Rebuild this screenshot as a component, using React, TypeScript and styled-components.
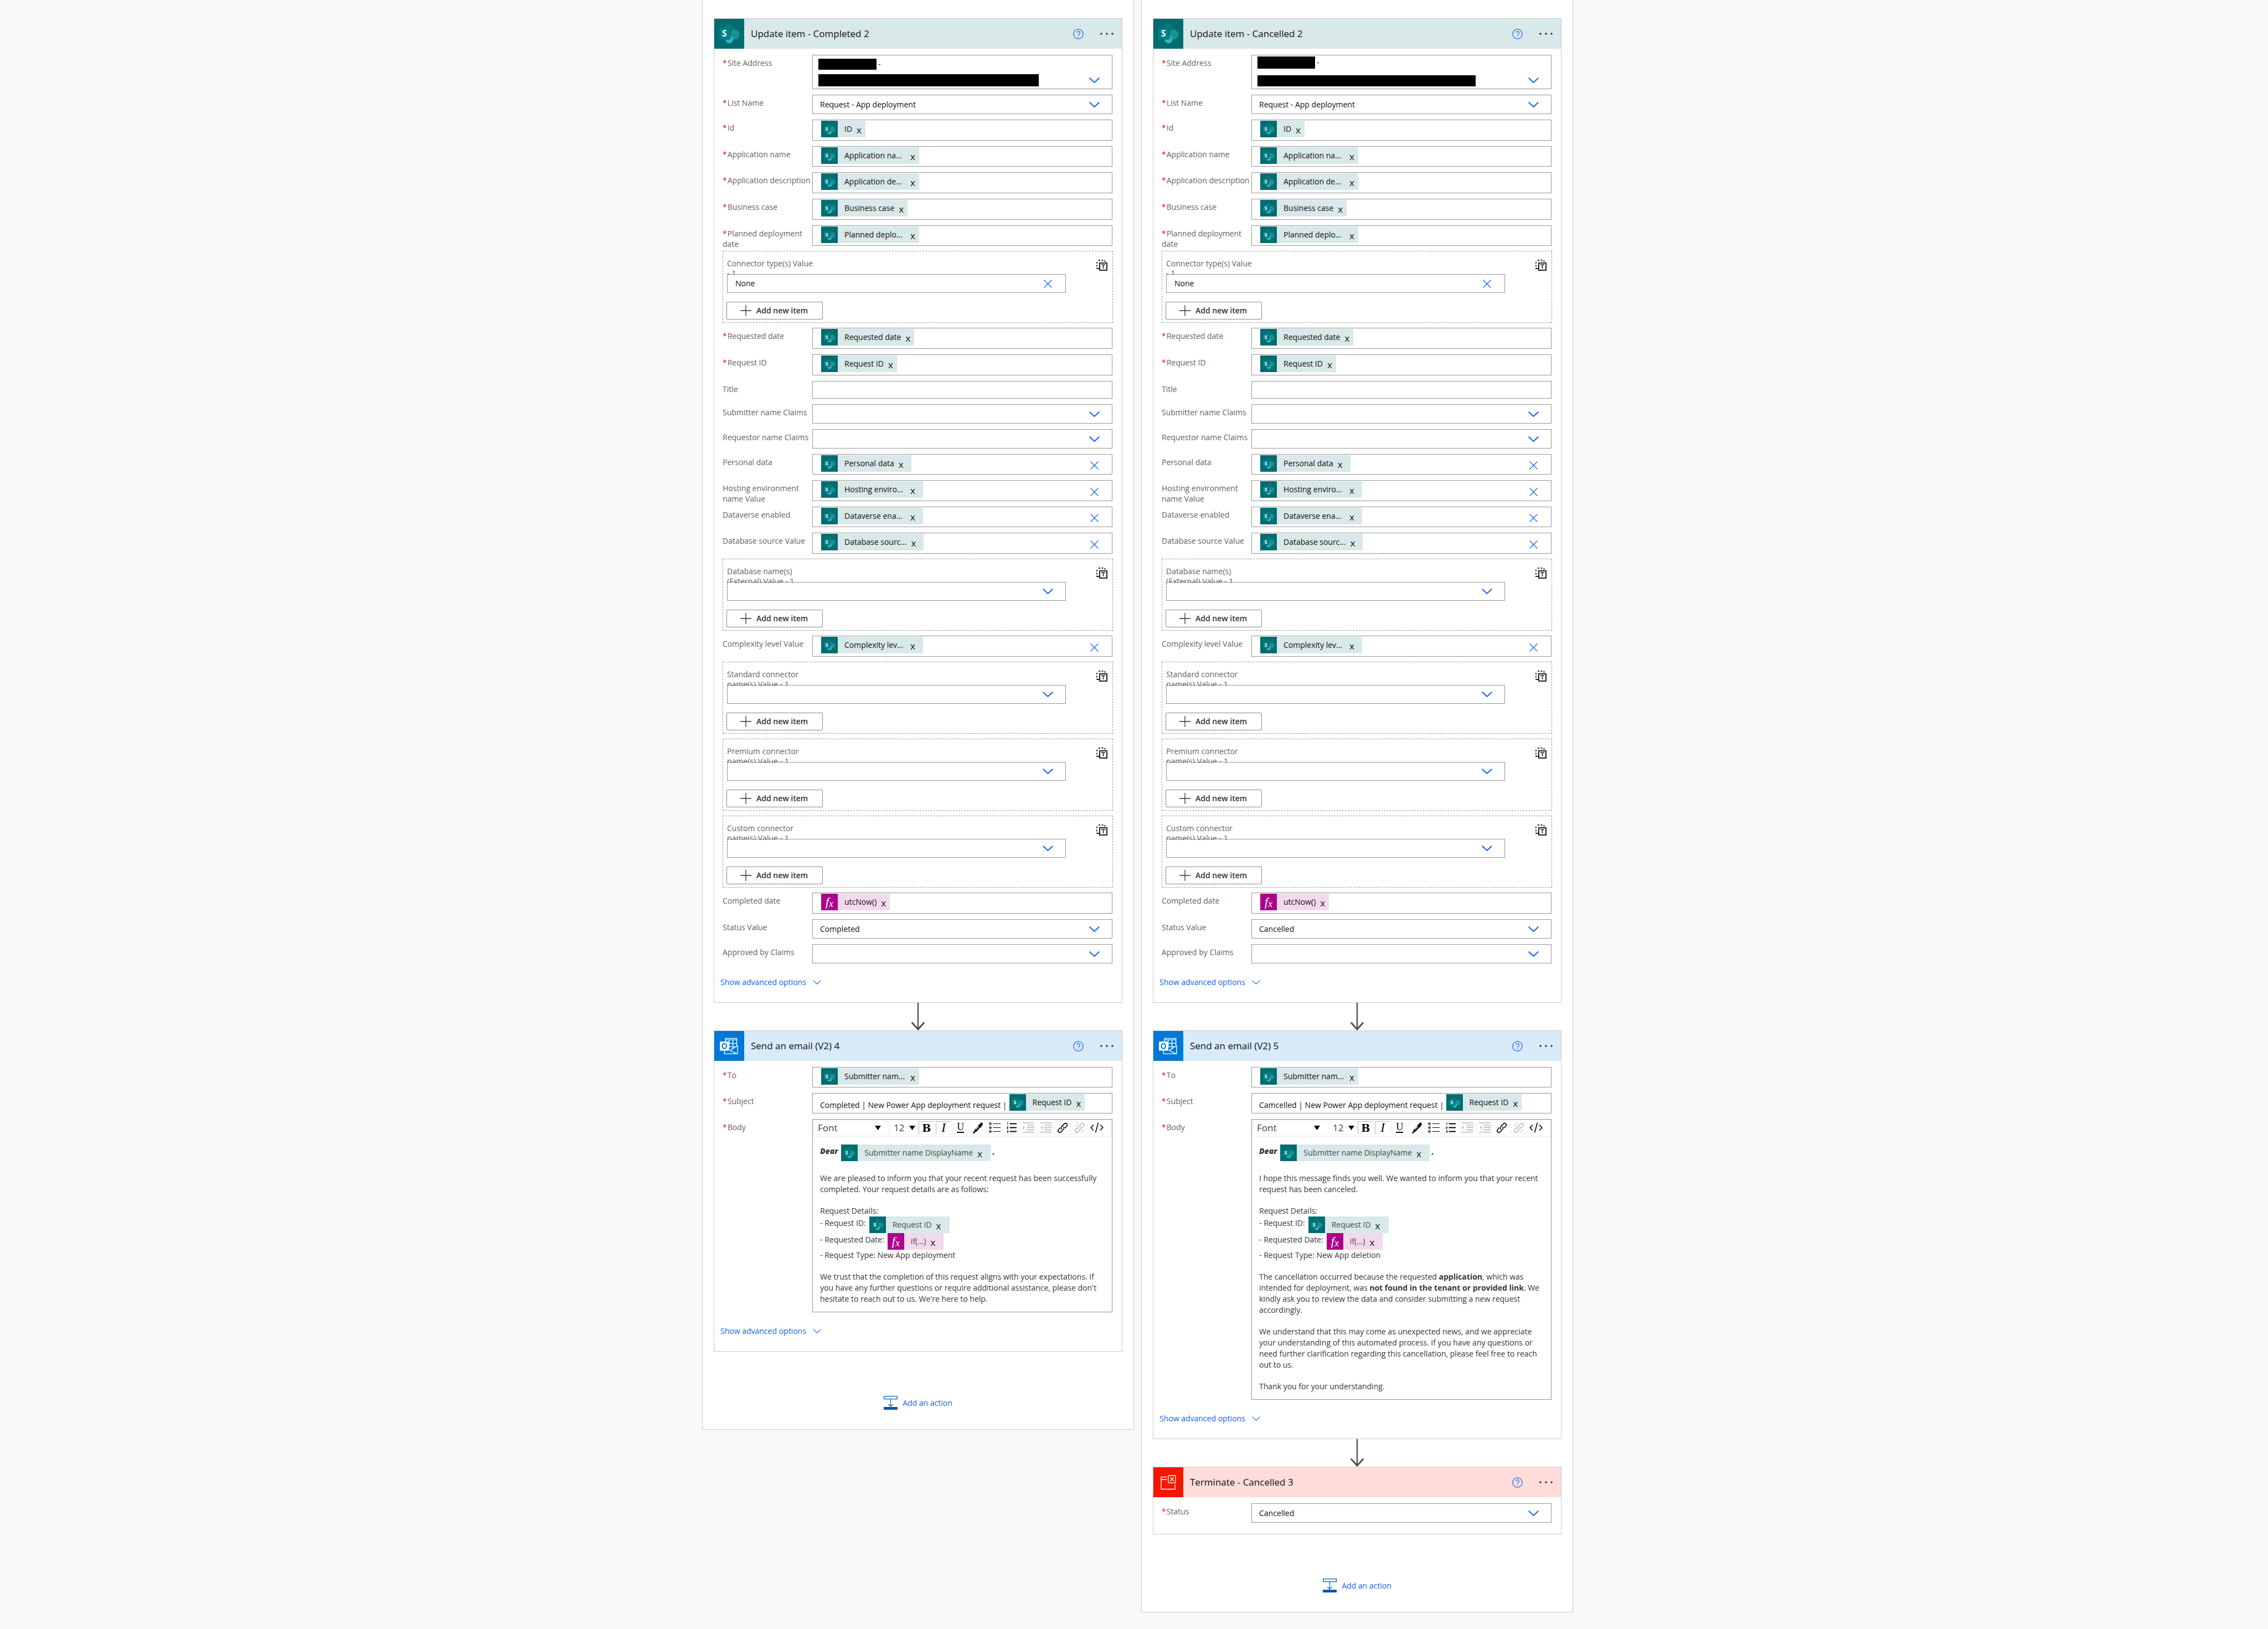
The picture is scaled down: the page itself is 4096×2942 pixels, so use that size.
import React, { useId } from "react";
import styled, { createGlobalStyle, css } from "styled-components";

const colors = {
  page: "#f8f8f8",
  panelBorder: "#c8c8c8",
  fieldBorder: "#949494",
  label: "#666462",
  body: "#383838",
  link: "#1462fa",
  required: "#e81123",
};

const GlobalStyle = createGlobalStyle`
  *, *::before, *::after { box-sizing: border-box; }
  html, body { margin: 0; background: ${colors.page}; }
  body, button, input, select {
    font-family: "Open Sans", "Noto Sans", sans-serif;
    font-size: 14px;
    line-height: 20px;
  }
  button { margin: 0; padding: 0; border: 0; background: none; color: inherit; cursor: pointer; }
  svg { display: block; flex: none; }
  p { margin: 0; }
`;

/* ---------- page ---------- */

const Canvas = styled.main`
  display: flex;
  justify-content: center;
  align-items: flex-start;
  gap: 13px;
  padding: 0 0 31px 13px;
`;

const Branch = styled.section`
  flex: 0 1 780px;
  min-width: 0;
  display: flex;
  flex-direction: column;
  padding: 33px 20px 35px;
  background: #fff;
  border: 1px solid ${colors.panelBorder};
  border-top: 0;
`;

const Connector = styled.div`
  display: flex;
  justify-content: center;
  height: 50px;
`;

const AddAction = styled.button`
  align-self: center;
  display: flex;
  align-items: center;
  gap: 9px;
  margin-top: 80px;
  color: ${colors.link};
`;

/* ---------- card ---------- */

const Card = styled.article`
  border: 1px solid ${colors.panelBorder};
  background: #fff;
`;

const CardHeader = styled.header<{ $tint: string }>`
  display: flex;
  align-items: center;
  height: 54px;
  padding-right: 15px;
  background: ${(p) => p.$tint};
`;

const CardLogo = styled.span<{ $color: string }>`
  flex: none;
  width: 54px;
  height: 54px;
  background: ${(p) => p.$color};
`;

const CardTitle = styled.h2`
  flex: 1;
  margin: 0 0 0 12px;
  font-size: 17px;
  line-height: 24px;
  font-weight: 400;
  color: #111;
`;

const HeaderButtons = styled.div`
  display: flex;
  align-items: center;
  gap: 30px;
`;

const CardBody = styled.div<{ $bottom: number }>`
  padding: 11px 17px ${(p) => p.$bottom}px 15px;
`;

const AdvancedButton = styled.button`
  display: flex;
  align-items: center;
  gap: 12px;
  margin: 24px 0 0 -4px;
  color: ${colors.link};
`;

/* ---------- rows ---------- */

const Row = styled.div`
  display: grid;
  grid-template-columns: 162px minmax(0, 1fr);
  align-items: start;
`;

const Rows = styled.div`
  display: flex;
  flex-direction: column;
  & > * + * { margin-top: 9px; }
  & > ${Row} + ${Row} { margin-top: 10px; }
`;

const Label = styled.label`
  height: 32px;
  padding-top: 5px;
  line-height: 19px;
  color: ${colors.label};
`;

const Required = styled.span`
  margin-right: 1px;
  color: ${colors.required};
`;

const box = css`
  border: 1px solid ${colors.fieldBorder};
  background: #fff;
  color: #111;
`;

const TextInput = styled.input`
  ${box}
  width: 100%;
  height: 32px;
  padding: 0 13px;
  border-radius: 0;
`;

const SelectFrame = styled.div<{ $height: number }>`
  ${box}
  display: grid;
  align-items: center;
  height: ${(p) => p.$height}px;
  & > * { grid-area: 1 / 1; }
  & > svg { justify-self: end; margin-right: 22px; pointer-events: none; }
`;

const Select = styled.select`
  appearance: none;
  width: 100%;
  height: 100%;
  padding: 0 60px 0 13px;
  border: 0;
  border-radius: 0;
  background: transparent;
  color: #111;
`;

const ClearFrame = styled.div`
  ${box}
  display: flex;
  align-items: center;
  height: 34px;
  padding-right: 24px;
`;

const BareInput = styled.input`
  flex: 1;
  min-width: 0;
  padding: 0 14px;
  border: 0;
  background: transparent;
  color: #111;
`;

const TokenField = styled.div<{ $height: number }>`
  ${box}
  display: flex;
  align-items: flex-start;
  height: ${(p) => p.$height}px;
  padding: 1px 24px 0 15px;
`;

const ClearButton = styled.button`
  align-self: center;
  margin: 3px 0 0 auto;
`;

const SubjectText = styled.span`
  margin: 10px 4px 0 -2px;
  white-space: nowrap;
`;

const AddressBox = styled.button`
  ${box}
  display: flex;
  align-items: flex-end;
  justify-content: space-between;
  width: 100%;
  height: 62px;
  padding: 0 22px 4px 10px;
`;

const AddressLines = styled.span<{ $gap: number }>`
  display: flex;
  flex-direction: column;
  gap: ${(p) => p.$gap}px;
`;

const AddressLine = styled.span<{ $height: number }>`
  display: flex;
  align-items: center;
  gap: 3px;
  height: ${(p) => p.$height}px;
`;

const Redaction = styled.span<{ $width: number }>`
  width: ${(p) => p.$width}px;
  height: 100%;
  background: #000;
`;

const AddressChevron = styled.span`
  padding-bottom: 6px;
`;

/* ---------- tokens ---------- */

const Token = styled.span<{ $tint: string; $end: number; $color: string }>`
  flex: none;
  display: inline-flex;
  align-items: center;
  height: 30px;
  padding-right: ${(p) => p.$end}px;
  background: ${(p) => p.$tint};
  color: ${(p) => p.$color};
  line-height: 20px;
`;

const TokenLabel = styled.span<{ $wide: boolean }>`
  min-width: ${(p) => (p.$wide ? 111 : 0)}px;
  margin: 0 8px 0 12px;
  white-space: nowrap;
`;

const TokenRemove = styled.button`
  padding-top: 3px;
  font-size: 17px;
  color: #111;
`;

const TokenLogo = styled.span<{ $color: string }>`
  display: flex;
  align-items: center;
  justify-content: center;
  width: 30px;
  height: 30px;
  background: ${(p) => p.$color};
`;

const Formula = styled.span`
  font: italic 22px/30px "Liberation Serif", serif;
  color: #fff;
  & > sub { font-size: 18px; line-height: 0; vertical-align: -2px; }
`;

/* ---------- repeated group ---------- */

const Group = styled.div`
  display: grid;
  grid-template-columns: minmax(0, 1fr) 84px;
  align-items: start;
  margin-right: -1px;
  height: 130px;
  padding: 12px 0 5px 7px;
  border: 1px dashed #999;
`;

const GroupMain = styled.div`
  display: flex;
  flex-direction: column;
`;

const GroupLabel = styled.label`
  position: relative;
  width: 160px;
  height: 31px;
  margin-bottom: -2px;
  padding-top: 1px;
  overflow: hidden;
  line-height: 18px;
  color: ${colors.label};
  pointer-events: none;
`;

const GroupToggle = styled.button`
  justify-self: end;
  margin: 3px 9px 0 0;
`;

const AddItem = styled.button`
  display: flex;
  align-items: center;
  gap: 9px;
  width: 174px;
  height: 32px;
  margin: 16px 0 0 -1px;
  padding-left: 24px;
  border: 1px solid #8a8886;
  border-radius: 2px;
  font-weight: 600;
  color: #323130;
`;

/* ---------- rich text ---------- */

const Editor = styled.div`
  ${box}
  padding-bottom: 13px;
`;

const Toolbar = styled.div`
  display: flex;
  align-items: center;
  gap: 1px;
  height: 31px;
  padding: 1px 12px 3px 1px;
  border: 1px solid #ededed;
`;

const ToolSelectFrame = styled.div<{ $width: number; $arrow: number }>`
  display: grid;
  align-items: center;
  flex: none;
  width: ${(p) => p.$width}px;
  height: 25px;
  border: 1px solid #f1f1f1;
  border-radius: 2px;
  & > * { grid-area: 1 / 1; }
  & > svg { justify-self: end; margin-right: ${(p) => p.$arrow}px; pointer-events: none; }
`;

const ToolSelect = styled.select`
  appearance: none;
  width: 100%;
  height: 100%;
  padding: 0 0 0 6px;
  border: 0;
  background: transparent;
  font-size: 17px;
  line-height: 22px;
  color: #444;
`;

const ToolButtons = styled.div`
  flex: 1;
  display: grid;
  grid-template-columns: repeat(11, minmax(0, 1fr));
  column-gap: 2px;
`;

const ToolButton = styled.button<{ $active?: boolean; $bare?: boolean }>`
  display: flex;
  align-items: center;
  justify-content: center;
  height: 24px;
  border: 1px solid ${(p) => (p.$bare ? "transparent" : "#f1f1f1")};
  border-radius: 2px;
  color: #000;
  ${(p) => p.$active && css`
    border-top-color: #b5b5b5;
    border-left-color: #b5b5b5;
  `}
  &:disabled { color: #b8b8b8; }
`;

const Glyph = styled.span<{ $kind: "b" | "i" | "u" }>`
  font-family: "DejaVu Serif", serif;
  line-height: 22px;
  ${(p) => p.$kind === "b" && css`font-size: 19px; font-weight: 700;`}
  ${(p) => p.$kind === "i" && css`font-family: "Liberation Serif", serif; font-size: 23px; font-style: italic;`}
  ${(p) => p.$kind === "u" && css`font-family: "Liberation Serif", serif; font-size: 18px; border-bottom: 2px solid; line-height: 17px;`}
`;

const Message = styled.div`
  display: flex;
  flex-direction: column;
  gap: 19px;
  padding: 14px 13px 0;
  color: ${colors.body};
`;

const Line = styled.div`
  display: flex;
  align-items: flex-start;
  gap: 6px;
  line-height: 24px;
`;

const Greeting = styled(Line)`
  margin-bottom: 2px;
  font-weight: 700;
  font-style: italic;
  gap: 4px;
  & > span > * { font-style: normal; font-weight: 400; }
  & > strong { margin-right: 2px; }
`;

/* ---------- drawings ---------- */

const Chevron = ({ w = 19, h = 10, stroke = 2 }) => (
  <svg width={w} height={h} viewBox="0 0 19 10" fill="none" stroke={colors.link} strokeWidth={stroke}>
    <path d="M0.7 0.7 9.5 9 18.3 0.7" />
  </svg>
);

const Cross = () => (
  <svg width="15" height="15" viewBox="0 0 15 15" stroke={colors.link} strokeWidth="1.3">
    <path d="M0.5 0.5 14.5 14.5M14.5 0.5 0.5 14.5" />
  </svg>
);

const SharePointLogo = ({ size }: { size: number }) => (
  <svg width={size} height={size} viewBox="0 0 198 198">
    <circle cx="98" cy="71" r="38" fill="#03787c" />
    <circle cx="134" cy="104" r="33" fill="#1a8f94" />
    <circle cx="100" cy="136" r="26" fill="#2fb6c4" />
    <path d="M38 70H110V128a10 10 0 0 1-10 10H74Z" fill="#02585b" opacity=".55" />
    <rect x="33" y="64" width="69" height="69" rx="4" fill="#038387" />
    <text x="67" y="118" textAnchor="middle" fontFamily="Open Sans, sans-serif" fontWeight="700" fontSize="56" fill="#fff">S</text>
  </svg>
);

const OutlookLogo = () => (
  <svg width="54" height="54" viewBox="0 0 198 198" fill="none" stroke="#fff" strokeWidth="5">
    <path d="M73 70V49H149V100M73 58H149M98 60V110M123 60V118M98 82H149M98 104H140" />
    <path d="M67 130V151H154V98L104 128L150 151" />
    <rect x="37" y="70" width="61" height="60" rx="3" fill="#fff" stroke="none" />
    <ellipse cx="67" cy="100" rx="14" ry="16" stroke="#0078d7" strokeWidth="8" />
  </svg>
);

const TerminateLogo = () => (
  <svg width="54" height="54" viewBox="0 0 108 108" fill="none" stroke="#fff" strokeWidth="2.6">
    <path d="M49 35H28V79H78V61M28 44H49" />
    <rect x="54" y="30" width="26" height="26" />
    <path d="M61 36 74 50M74 36 61 50" />
  </svg>
);

const HelpIcon = () => (
  <svg width="19" height="19" viewBox="0 0 19 19" fill="none" stroke={colors.link} strokeWidth="1.2">
    <circle cx="9.5" cy="9.5" r="8.7" />
    <path d="M6.9 7.3a2.7 2.7 0 1 1 4.3 2.1c-1.1.8-1.7 1.2-1.7 2.4M9.5 13.3v1.3" />
  </svg>
);

const MoreIcon = () => (
  <svg width="24" height="4" viewBox="0 0 24 4" fill="#333">
    <circle cx="2" cy="2" r="1.8" />
    <circle cx="12" cy="2" r="1.8" />
    <circle cx="22" cy="2" r="1.8" />
  </svg>
);

const ArrowDown = () => (
  <svg width="26" height="50" viewBox="0 0 26 50" fill="none" stroke="#505050">
    <path d="M13 0V47" strokeWidth="2.4" />
    <path d="M1.8 35.5 13 48 24.2 35.5" strokeWidth="3" />
  </svg>
);

const AddActionIcon = () => (
  <svg width="25" height="25" viewBox="0 0 25 25" fill="none" stroke="#0057a8">
    <rect x="0.6" y="0.6" width="23.8" height="5" strokeWidth="1.2" />
    <path d="M12.5 6V19M8.5 15 12.5 19 16.5 15" strokeWidth="1.2" />
    <rect x="0" y="20" width="25" height="5" fill="#0057a8" stroke="none" />
  </svg>
);

const SwitchIcon = () => (
  <svg width="20" height="20" viewBox="0 0 20 20" fill="none" stroke="#222">
    <path d="M4 1H15M1 4V17M2 16H5M15.5 1V5" strokeWidth="1.8" strokeDasharray="3 2.4" />
    <rect x="6" y="6" width="13" height="13" strokeWidth="2" />
    <path d="M8.8 9.2H16.2M12.5 9.2V16" strokeWidth="1.6" />
  </svg>
);

const PlusIcon = () => (
  <svg width="20" height="20" viewBox="0 0 20 20" stroke="#323130" strokeWidth="1.3">
    <path d="M10 0V20M0 10H20" />
  </svg>
);

const Triangle = () => (
  <svg width="11" height="8" viewBox="0 0 11 8"><path d="M0 0H11L5.5 8Z" fill="#000" /></svg>
);

const PenIcon = () => (
  <svg width="20" height="20" viewBox="0 0 20 20" fill="currentColor">
    <path d="M14.5 1.5c1-1.3 2.7-1.2 3.7-.2s1 2.5 0 3.6l-2 2.3.6.9-1.3 1.3-1-.7-6.8 7.8-4.2 1.3-.5-.5 1.3-4.2 6.8-6.8-.8-1 1.3-1.3 1 .6zM1 17.5h4v2H1z" />
    <path d="M6 13 11.5 7.5" stroke="#fff" strokeWidth="1.2" />
  </svg>
);

const BulletsIcon = () => (
  <svg width="21" height="19" viewBox="0 0 21 19" fill="none" stroke="currentColor" strokeWidth="1.3">
    <circle cx="2.5" cy="2.5" r="1.6" />
    <circle cx="2.5" cy="9.5" r="1.6" />
    <circle cx="2.5" cy="16.5" r="1.6" />
    <path d="M7.5 2.5H21M7.5 9.5H21M7.5 16.5H21" strokeWidth="1.2" />
  </svg>
);

const NumbersIcon = () => (
  <svg width="18" height="19" viewBox="0 0 18 19" fill="none" stroke="currentColor" strokeWidth="1">
    <path d="M5.5 2.5H18M5.5 9.5H18M5.5 16.5H18" strokeWidth="2" />
    <path d="M1 1.2 2 .6V4.5M.6 7.8h2v1.6h-2v2h2.2M.6 14.6h2v3.8h-2M.8 16.5h1.8" />
  </svg>
);

const IndentIcon = ({ flip = false }) => (
  <svg width="21" height="19" viewBox="0 0 21 19" fill="none" stroke="currentColor" strokeWidth="1.6">
    <path d="M0 1H21M8 5.2H21M8 9.4H21M8 13.6H21M0 17.8H21" />
    <path d={flip ? "M5 6V13L1.5 9.5Z" : "M0.5 6V13L4 9.5Z"} fill="currentColor" stroke="none" />
  </svg>
);

const LinkIcon = ({ broken = false }) => (
  <svg width="20" height="20" viewBox="0 0 20 20" fill="none" stroke="currentColor" strokeWidth="1.6">
    <path d="M8.5 12.5C6.8 10.8 7 9.3 8.2 8L13 2.6c2.6-2.6 7 .9 4.6 4L14.5 10.2" />
    <path d="M11.5 7.5C13.2 9.2 13 10.7 11.8 12L7 17.4c-2.6 2.6-7-.9-4.6-4L5.5 9.8" />
    {broken && <path d="M2 5.5 4.5 6.5M5.5 1.5 6.5 4M18 14.5 15.5 13.5M14.5 18.5 13.5 16" strokeWidth="1.4" />}
  </svg>
);

const CodeIcon = () => (
  <svg width="24" height="19" viewBox="0 0 24 19" fill="none" stroke="currentColor" strokeWidth="1.6">
    <path d="M6 4.5 1.2 9.5 6 14.5M18 4.5 22.8 9.5 18 14.5M14.5 0.5 9.5 18.5" />
  </svg>
);

/* ---------- composed parts ---------- */

type ChipProps = { text: string; formula?: boolean; end?: number; wide?: boolean; soft?: boolean };

const Chip = ({ text, formula = false, end = 7, wide, soft = false }: ChipProps) => (
  <Token $tint={formula ? "#f3d9ee" : "#d9e8e8"} $end={end} $color={soft ? "#4a4a4a" : "#111"}>
    <TokenLogo $color={formula ? "#ad008c" : "#036c70"}>
      {formula ? <Formula>f<sub>x</sub></Formula> : <SharePointLogo size={30} />}
    </TokenLogo>
    <TokenLabel $wide={wide ?? text.endsWith("...")}>{text}</TokenLabel>
    <TokenRemove type="button" aria-label={`Remove ${text}`}>x</TokenRemove>
  </Token>
);

type FieldProps = { label: string; required?: boolean; children: (id: string) => React.ReactNode };

const Field = ({ label, required = false, children }: FieldProps) => {
  const id = useId();
  return (
    <Row>
      <Label htmlFor={id} id={`${id}-label`}>
        {required && <Required>*</Required>}
        {label}
      </Label>
      {children(id)}
    </Row>
  );
};

type TokenRowProps = {
  label: string;
  token: string;
  required?: boolean;
  formula?: boolean;
  clearable?: boolean;
  height?: number;
  before?: string;
};

const TokenRow = ({ label, token, required, formula, clearable = false, height = 38, before }: TokenRowProps) => (
  <Field label={label} required={required}>
    {(id) => (
      <TokenField id={id} role="textbox" aria-labelledby={`${id}-label`} $height={height}>
        {before && <SubjectText>{before}</SubjectText>}
        <Chip text={token} formula={formula} end={clearable ? 14 : 7} />
        {clearable && (
          <ClearButton type="button" aria-label={`Clear ${label}`}><Cross /></ClearButton>
        )}
      </TokenField>
    )}
  </Field>
);

const Dropdown = ({ id, value = "", height = 35 }: { id: string; value?: string; height?: number }) => (
  <SelectFrame $height={height}>
    <Select id={id} defaultValue={value}>
      <option value={value}>{value}</option>
    </Select>
    <Chevron />
  </SelectFrame>
);

const SelectRow = ({ label, value, required }: { label: string; value?: string; required?: boolean }) => (
  <Field label={label} required={required}>{(id) => <Dropdown id={id} value={value} />}</Field>
);

const ItemGroup = ({ label, value }: { label: string; value?: string }) => {
  const id = useId();
  return (
    <Group>
      <GroupMain>
        <GroupLabel htmlFor={id}>{label}</GroupLabel>
        {value ? (
          <ClearFrame>
            <BareInput id={id} defaultValue={value} />
            <button type="button" aria-label="Clear value"><Cross /></button>
          </ClearFrame>
        ) : (
          <Dropdown id={id} height={34} />
        )}
        <AddItem type="button"><PlusIcon />Add new item</AddItem>
      </GroupMain>
      <GroupToggle type="button" aria-label="Switch to input entire array"><SwitchIcon /></GroupToggle>
    </Group>
  );
};

const themes = {
  sharepoint: { color: "#036c70", tint: "#d9e8e8", logo: <SharePointLogo size={54} /> },
  outlook: { color: "#0078d7", tint: "#d9eaf9", logo: <OutlookLogo /> },
  terminate: { color: "#f41700", tint: "#fddcda", logo: <TerminateLogo /> },
};

type ActionCardProps = {
  kind: keyof typeof themes;
  title: string;
  advanced?: boolean;
  children: React.ReactNode;
};

const ActionCard = ({ kind, title, advanced = false, children }: ActionCardProps) => {
  const theme = themes[kind];
  return (
    <Card>
      <CardHeader $tint={theme.tint}>
        <CardLogo $color={theme.color}>{theme.logo}</CardLogo>
        <CardTitle>{title}</CardTitle>
        <HeaderButtons>
          <button type="button" aria-label="Help"><HelpIcon /></button>
          <button type="button" aria-label="More commands"><MoreIcon /></button>
        </HeaderButtons>
      </CardHeader>
      <CardBody $bottom={advanced ? 26 : 20}>
        <Rows>{children}</Rows>
        {advanced && (
          <AdvancedButton type="button">
            Show advanced options
            <Chevron w={15} h={8} stroke={1.5} />
          </AdvancedButton>
        )}
      </CardBody>
    </Card>
  );
};

type Address = { first: number; second: number; firstHeight: number; secondHeight: number; gap: number };

const UpdateCard = ({ title, status, address }: { title: string; status: string; address: Address }) => (
  <ActionCard kind="sharepoint" title={title} advanced>
    <Field label="Site Address" required>
      {(id) => (
        <AddressBox id={id} type="button" aria-haspopup="listbox">
          <AddressLines $gap={address.gap}>
            <AddressLine $height={address.firstHeight}><Redaction $width={address.first} />-</AddressLine>
            <AddressLine $height={address.secondHeight}><Redaction $width={address.second} /></AddressLine>
          </AddressLines>
          <AddressChevron><Chevron /></AddressChevron>
        </AddressBox>
      )}
    </Field>
    <SelectRow label="List Name" value="Request - App deployment" required />
    <TokenRow label="Id" token="ID" required />
    <TokenRow label="Application name" token="Application na..." required height={37} />
    <TokenRow label="Application description" token="Application de..." required />
    <TokenRow label="Business case" token="Business case" required height={38} />
    <TokenRow label="Planned deployment date" token="Planned deplo..." required height={37} />
    <ItemGroup label="Connector type(s) Value - 1" value="None" />
    <TokenRow label="Requested date" token="Requested date" required />
    <TokenRow label="Request ID" token="Request ID" required />
    <Field label="Title">{(id) => <TextInput id={id} />}</Field>
    <SelectRow label="Submitter name Claims" />
    <SelectRow label="Requestor name Claims" />
    <TokenRow label="Personal data" token="Personal data" clearable height={37} />
    <TokenRow label="Hosting environment name Value" token="Hosting enviro..." clearable />
    <TokenRow label="Dataverse enabled" token="Dataverse ena..." clearable height={37} />
    <TokenRow label="Database source Value" token="Database sourc..." clearable />
    <ItemGroup label="Database name(s) (External) Value - 1" />
    <TokenRow label="Complexity level Value" token="Complexity lev..." clearable />
    <ItemGroup label="Standard connector name(s) Value - 1" />
    <ItemGroup label="Premium connector name(s) Value - 1" />
    <ItemGroup label="Custom connector name(s) Value - 1" />
    <TokenRow label="Completed date" token="utcNow()" formula />
    <SelectRow label="Status Value" value={status} />
    <SelectRow label="Approved by Claims" />
  </ActionCard>
);

const EditorToolbar = () => (
  <Toolbar role="toolbar" aria-label="Formatting">
    <ToolSelectFrame $width={136} $arrow={14}>
      <ToolSelect aria-label="Font"><option>Font</option></ToolSelect>
      <Triangle />
    </ToolSelectFrame>
    <ToolSelectFrame $width={51} $arrow={4}>
      <ToolSelect aria-label="Font size"><option>12</option></ToolSelect>
      <Triangle />
    </ToolSelectFrame>
    <ToolButtons>
      <ToolButton type="button" aria-label="Bold" $active><Glyph $kind="b">B</Glyph></ToolButton>
      <ToolButton type="button" aria-label="Italic" $active><Glyph $kind="i">I</Glyph></ToolButton>
      <ToolButton type="button" aria-label="Underline"><Glyph $kind="u">U</Glyph></ToolButton>
      <ToolButton type="button" aria-label="Text colour"><PenIcon /></ToolButton>
      <ToolButton type="button" aria-label="Bulleted list"><BulletsIcon /></ToolButton>
      <ToolButton type="button" aria-label="Numbered list"><NumbersIcon /></ToolButton>
      <ToolButton type="button" aria-label="Indent" disabled><IndentIcon /></ToolButton>
      <ToolButton type="button" aria-label="Outdent" disabled><IndentIcon flip /></ToolButton>
      <ToolButton type="button" aria-label="Insert link"><LinkIcon /></ToolButton>
      <ToolButton type="button" aria-label="Remove link" disabled><LinkIcon broken /></ToolButton>
      <ToolButton type="button" aria-label="Code view" $bare><CodeIcon /></ToolButton>
    </ToolButtons>
  </Toolbar>
);

type EmailCardProps = {
  title: string;
  subject: string;
  intro: string;
  requestType: string;
  children: React.ReactNode;
};

const EmailCard = ({ title, subject, intro, requestType, children }: EmailCardProps) => (
  <ActionCard kind="outlook" title={title} advanced>
    <TokenRow label="To" token="Submitter nam..." required height={37} />
    <TokenRow label="Subject" token="Request ID" before={subject} required height={37} />
    <Field label="Body" required>
      {(id) => (
        <Editor>
          <EditorToolbar />
          <Message id={id} role="textbox" aria-multiline="true" aria-labelledby={`${id}-label`}>
            <Greeting>
              <strong>Dear</strong>
              <Chip text="Submitter name DisplayName" end={15} soft />
              ,
            </Greeting>
            <p>{intro}</p>
            <div>
              <p>Request Details:</p>
              <Line>- Request ID: <Chip text="Request ID" end={15} soft /></Line>
              <Line>- Requested Date: <Chip text="if(...)" end={15} wide={false} formula soft /></Line>
              <p>- Request Type: {requestType}</p>
            </div>
            {children}
          </Message>
        </Editor>
      )}
    </Field>
  </ActionCard>
);

const AddActionButton = () => (
  <AddAction type="button"><AddActionIcon />Add an action</AddAction>
);

export default function App() {
  return (
    <>
      <GlobalStyle />
      <Canvas>
        <Branch>
          <UpdateCard
            title="Update item - Completed 2"
            status="Completed"
            address={{ first: 105, second: 398, firstHeight: 20, secondHeight: 22, gap: 8 }}
          />
          <Connector><ArrowDown /></Connector>
          <EmailCard
            title="Send an email (V2) 4"
            subject="Completed | New Power App deployment request |"
            intro="We are pleased to inform you that your recent request has been successfully completed. Your request details are as follows:"
            requestType="New App deployment"
          >
            <p>
              We trust that the completion of this request aligns with your expectations. If you have any
              further questions or require additional assistance, please don't hesitate to reach out to us.
              We're here to help.
            </p>
          </EmailCard>
          <AddActionButton />
        </Branch>
        <Branch>
          <UpdateCard
            title="Update item - Cancelled 2"
            status="Cancelled"
            address={{ first: 104, second: 394, firstHeight: 22, secondHeight: 20, gap: 12 }}
          />
          <Connector><ArrowDown /></Connector>
          <EmailCard
            title="Send an email (V2) 5"
            subject="Camcelled | New Power App deployment request |"
            intro="I hope this message finds you well. We wanted to inform you that your recent request has been canceled."
            requestType="New App deletion"
          >
            <p>
              The cancellation occurred because the requested <b>application</b>, which was intended for
              deployment, was <b>not found in the tenant or provided link</b>. We kindly ask you to review
              the data and consider submitting a new request accordingly.
            </p>
            <p>
              We understand that this may come as unexpected news, and we appreciate your understanding of
              this automated process. If you have any questions or need further clarification regarding this
              cancellation, please feel free to reach out to us.
            </p>
            <p>Thank you for your understanding.</p>
          </EmailCard>
          <Connector><ArrowDown /></Connector>
          <ActionCard kind="terminate" title="Terminate - Cancelled 3">
            <SelectRow label="Status" value="Cancelled" required />
          </ActionCard>
          <AddActionButton />
        </Branch>
      </Canvas>
    </>
  );
}
